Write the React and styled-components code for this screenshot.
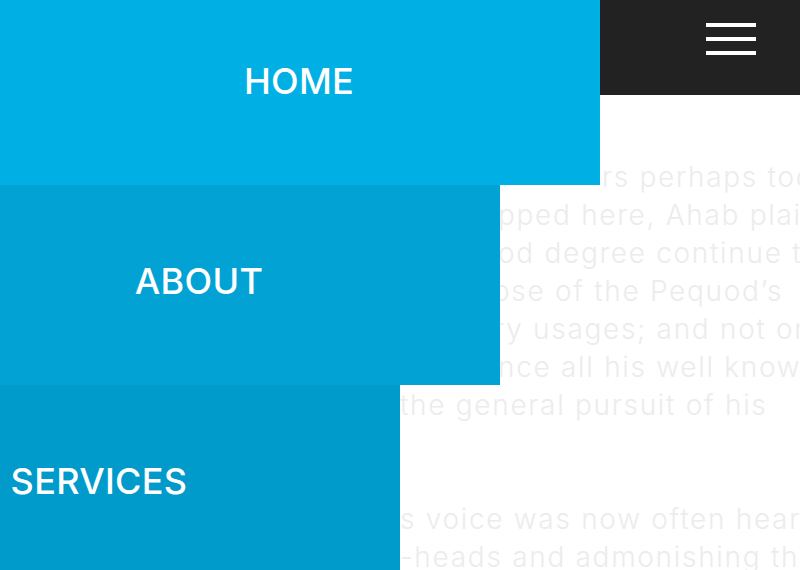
import styled, { createGlobalStyle } from "styled-components";

const GlobalStyle = createGlobalStyle`
  html, body {
    margin: 0;
    padding: 0;
    overflow: hidden;
    background: #ffffff;
  }
  * {
    box-sizing: border-box;
  }
`;

const Page = styled.div`
  position: relative;
  width: 800px;
  height: 570px;
  overflow: hidden;
  background: #ffffff;
  font-family: Inter, "Liberation Sans", sans-serif;
`;

const Article = styled.main`
  padding: 158px 0 0 400px;
  color: #ececec;
  font-size: 28px;
  font-weight: 300;
  line-height: 38px;
  letter-spacing: 1.7px;
`;

const Paragraph = styled.p`
  margin: 0 0 76px;
`;

const Line = styled.span`
  display: block;
  white-space: nowrap;
  padding-left: ${(props) => props.$lead || 0}px;
`;

const TopBar = styled.header`
  position: absolute;
  top: 0;
  right: 0;
  width: 200px;
  height: 95px;
  background: #222222;
  display: flex;
  justify-content: flex-end;
  align-items: flex-start;
  padding: 23px 44px 0 0;
`;

const Burger = styled.button`
  display: flex;
  flex-direction: column;
  gap: 10px;
  width: 50px;
  padding: 0;
  border: 0;
  background: none;
  cursor: pointer;
`;

const BurgerBar = styled.span`
  display: block;
  width: 50px;
  height: 4px;
  background: #ffffff;
`;

const Menu = styled.nav`
  position: absolute;
  top: 0;
  left: 0;
`;

const MenuList = styled.ul`
  list-style: none;
  margin: -15px 0 0;
  padding: 0;
`;

const MenuItem = styled.li`
  width: 600px;
  height: 200px;
  background: ${(props) => props.$color};
  transform: translateX(${(props) => -props.$shift}px);
`;

const MenuLink = styled.a`
  display: flex;
  align-items: center;
  justify-content: center;
  height: 100%;
  padding: 0 2px 9px 0;
  color: #ffffff;
  text-decoration: none;
  font-family: Inter, "Liberation Sans", sans-serif;
  font-size: 36px;
  font-weight: 500;
  letter-spacing: 0.3px;
`;

const items = [
  { label: "HOME", color: "#00b0e4", shift: 0 },
  { label: "ABOUT", color: "#02a3d4", shift: 100 },
  { label: "SERVICES", color: "#009bcb", shift: 200 },
];

const firstParagraph = [
  { lead: 202, text: "rs perhaps too much" },
  { lead: 98, text: "pped here, Ahab plainly" },
  { lead: 98, text: "od degree continue to" },
  { lead: 93, text: "ose of the Pequod’s" },
  { lead: 94, text: "ry usages; and not only" },
  { lead: 98, text: "nce all his well known" },
  { lead: 0, text: "the general pursuit of his" },
];

const secondParagraph = [
  { lead: -2, text: "s voice was now often heard" },
  { lead: -7, text: "-heads and admonishing them" },
];

function App() {
  return (
    <Page>
      <GlobalStyle />
      <Article>
        <Paragraph>
          {firstParagraph.map((line, i) => (
            <Line key={i} $lead={line.lead}>
              {line.text}
            </Line>
          ))}
        </Paragraph>
        <Paragraph>
          {secondParagraph.map((line, i) => (
            <Line key={i} $lead={line.lead}>
              {line.text}
            </Line>
          ))}
        </Paragraph>
      </Article>
      <TopBar>
        <Burger aria-label="Menu">
          <BurgerBar />
          <BurgerBar />
          <BurgerBar />
        </Burger>
      </TopBar>
      <Menu>
        <MenuList>
          {items.map((item) => (
            <MenuItem key={item.label} $color={item.color} $shift={item.shift}>
              <MenuLink href="#">{item.label}</MenuLink>
            </MenuItem>
          ))}
        </MenuList>
      </Menu>
    </Page>
  );
}

export default App;
